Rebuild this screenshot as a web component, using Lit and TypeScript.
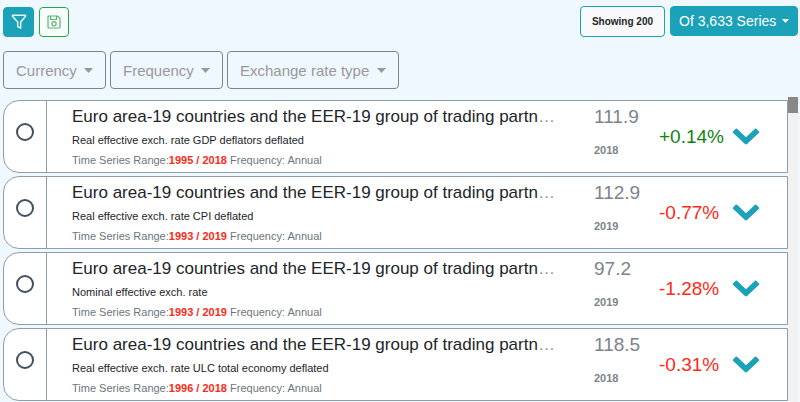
import { LitElement, html, css } from "lit";
import { customElement, property } from "lit/decorators.js";

interface Series {
  title: string;
  subtitle: string;
  from: number;
  to: number;
  value: string;
  change: number;
}

const TITLE = "Euro area-19 countries and the EER-19 group of trading partners";

const SERIES: Series[] = [
  { title: TITLE, subtitle: "Real effective exch. rate GDP deflators deflated", from: 1995, to: 2018, value: "111.9", change: 0.14 },
  { title: TITLE, subtitle: "Real effective exch. rate CPI deflated", from: 1993, to: 2019, value: "112.9", change: -0.77 },
  { title: TITLE, subtitle: "Nominal effective exch. rate", from: 1993, to: 2019, value: "97.2", change: -1.28 },
  { title: TITLE, subtitle: "Real effective exch. rate ULC total economy deflated", from: 1996, to: 2018, value: "118.5", change: -0.31 },
];

@customElement("drop-down")
export class DropDown extends LitElement {
  @property() label = "";
  @property({ type: Boolean, reflect: true }) solid = false;

  static styles = css`
    :host {
      display: inline-grid;
      align-items: center;
      color: #999;
    }
    select {
      grid-area: 1 / 1;
      appearance: none;
      box-sizing: border-box;
      height: 38px;
      margin: 0;
      padding: 0 28px 0 12px;
      border: 1px solid #7b858f;
      border-radius: 4px;
      background: transparent;
      color: inherit;
      font: 15px "Liberation Sans", Arial, sans-serif;
      cursor: pointer;
    }
    svg {
      grid-area: 1 / 1;
      justify-self: end;
      margin-right: 13px;
      width: 9px;
      height: 5px;
      fill: currentColor;
      pointer-events: none;
    }
    :host([solid]) {
      color: #fff;
    }
    :host([solid]) select {
      height: 30px;
      padding: 0 20px 0 8px;
      border-color: #17a2b8;
      background: #1ba1b8;
      font-size: 14px;
    }
    :host([solid]) svg {
      margin-right: 9px;
      width: 7px;
      height: 4px;
    }
  `;

  render() {
    return html`
      <select aria-label=${this.label}>
        <option>${this.label}</option>
      </select>
      <svg viewBox="0 0 10 5" preserveAspectRatio="none" aria-hidden="true"><path d="M0 0h10L5 5z" /></svg>
    `;
  }
}

@customElement("series-row")
export class SeriesRow extends LitElement {
  @property({ attribute: false }) series!: Series;

  static styles = css`
    :host {
      display: block;
    }
    .row {
      box-sizing: border-box;
      display: flex;
      height: 73px;
      border: 1px solid #8f9dab;
      border-radius: 16px 0 0 16px;
      background: #fff;
    }
    .pick {
      flex: none;
      box-sizing: border-box;
      width: 43px;
      display: grid;
      place-items: center;
      padding-bottom: 9px;
      border-right: 1px solid #8f9dab;
    }
    input {
      appearance: none;
      box-sizing: border-box;
      width: 18px;
      height: 18px;
      margin: 0;
      border: 2px solid #40505f;
      border-radius: 50%;
    }
    input:checked {
      background: #40505f;
    }
    .info {
      flex: 1;
      min-width: 0;
      padding: 4px 0 0 25px;
    }
    .title {
      margin: 0;
      overflow: hidden;
      white-space: nowrap;
      text-overflow: ellipsis;
      font-size: 17px;
      font-weight: 400;
      line-height: 24px;
      color: #8a9299;
    }
    .name {
      color: #212529;
    }
    .subtitle,
    .meta {
      margin: 0;
      font-size: 11px;
      line-height: 20px;
      color: #212529;
      white-space: nowrap;
    }
    .subtitle {
      padding-top: 1px;
    }
    .meta {
      color: #6c757d;
    }
    .range {
      font-weight: 700;
      color: #ff2a17;
    }
    .latest {
      flex: none;
      width: 65px;
      margin-left: 33px;
      padding-top: 4px;
      color: #7b848c;
    }
    .value {
      font-size: 19px;
      line-height: 24px;
    }
    .year {
      padding-top: 11px;
      font-size: 11px;
      font-weight: 700;
      line-height: 20px;
    }
    .change {
      flex: none;
      width: 73px;
      padding-top: 24px;
      font-size: 19px;
      line-height: 24px;
      color: #ff2a17;
    }
    .change.up {
      color: #148214;
    }
    button {
      flex: none;
      align-self: center;
      display: flex;
      margin: 0 27px 0 0;
      padding: 0 0 2px;
      border: 0;
      background: none;
      cursor: pointer;
    }
    button svg {
      width: 28px;
      height: 18px;
      fill: #1ba1b8;
    }
  `;

  render() {
    const s = this.series;
    const up = s.change > 0;
    return html`
      <article class="row">
        <label class="pick"><input type="radio" name="series" aria-label="Select ${s.title}, ${s.subtitle}" /></label>
        <div class="info">
          <h2 class="title"><span class="name">${s.title}</span></h2>
          <p class="subtitle">${s.subtitle}</p>
          <p class="meta">Time Series Range:<span class="range">${s.from} / ${s.to}</span> Frequency: Annual</p>
        </div>
        <div class="latest">
          <div class="value">${s.value}</div>
          <div class="year">${s.to}</div>
        </div>
        <div class="change ${up ? "up" : ""}">${up ? "+" : ""}${s.change}%</div>
        <button aria-label="Show details">
          <svg viewBox="0 0 28 18" aria-hidden="true">
            <path d="M1 4.500L3.400 1.900Q4.300 1 5.300 1.900L14 10.300L22.700 1.900Q23.700 1 24.600 1.900L27 4.500Q27.600 5.300 26.800 6.100L15 17Q14 17.800 13 17L1.200 6.100Q.4 5.300 1 4.500z" />
          </svg>
        </button>
      </article>
    `;
  }
}

@customElement("app-root")
export class AppRoot extends LitElement {
  static styles = css`
    :host {
      box-sizing: border-box;
      display: flex;
      flex-direction: column;
      height: 100vh;
      overflow: hidden;
      padding: 6px 2px 0 3px;
      background: #f0f8ff;
      font-family: "Liberation Sans", Arial, sans-serif;
    }
    .toolbar,
    .filters {
      flex: none;
      display: flex;
    }
    .toolbar {
      align-items: flex-start;
      gap: 5px;
    }
    .tool {
      box-sizing: border-box;
      display: grid;
      place-items: center;
      width: 30px;
      height: 30px;
      margin-top: 1px;
      padding: 0;
      border: 1px solid #28a745;
      border-radius: 4px;
      background: #f8fcfb;
      cursor: pointer;
    }
    .tool.filter {
      width: 31px;
      border-color: #17a2b8;
      background: #1ba1b8;
    }
    .tool svg {
      width: 14px;
      height: 14px;
      fill: none;
    }
    .tool .funnel {
      width: 16px;
      height: 16px;
    }
    .showing {
      box-sizing: border-box;
      height: 31px;
      margin-left: auto;
      padding: 0 11px;
      border: 1px solid #17a2b8;
      border-radius: 4px;
      background: #f8f9fa;
      color: #212529;
      font-size: 10px;
      font-weight: 700;
      line-height: 29px;
    }
    .filters {
      gap: 4px;
      padding-top: 14px;
    }
    .body {
      flex: 1;
      min-height: 0;
      display: flex;
      padding-top: 8px;
    }
    .list {
      flex: 1;
      min-width: 0;
      display: flex;
      flex-direction: column;
      gap: 3px;
      padding-top: 3px;
    }
    .track {
      flex: none;
      width: 10px;
      background: #f1f1f1;
    }
    .thumb {
      height: 16px;
      background: #888;
    }
  `;

  render() {
    return html`
      <div class="toolbar">
        <button class="tool filter" aria-label="Filter">
          <svg class="funnel" viewBox="0 0 16 16" stroke="#e8f6f9" stroke-width="1.500" stroke-linejoin="round" aria-hidden="true">
            <path d="M1.500 1.200h13v1L9.700 8v6.200L6.700 12.500V8L1.500 2.200z" />
          </svg>
        </button>
        <button class="tool" aria-label="Save">
          <svg viewBox="0 0 14 14" stroke="#5cb574" stroke-width="1.200" aria-hidden="true">
            <path d="M2 1h8.500L13 3.500V12a1 1 0 0 1-1 1H2a1 1 0 0 1-1-1V2a1 1 0 0 1 1-1zM3.500 1v3.500h6V1" />
            <circle cx="7" cy="8.800" r="2.100" />
          </svg>
        </button>
        <div class="showing">Showing 200</div>
        <drop-down solid label="Of 3,633 Series"></drop-down>
      </div>
      <div class="filters">
        <drop-down label="Currency"></drop-down>
        <drop-down label="Frequency"></drop-down>
        <drop-down label="Exchange rate type"></drop-down>
      </div>
      <div class="body">
        <main class="list">${SERIES.map((s) => html`<series-row .series=${s}></series-row>`)}</main>
        <div class="track"><div class="thumb"></div></div>
      </div>
    `;
  }
}
